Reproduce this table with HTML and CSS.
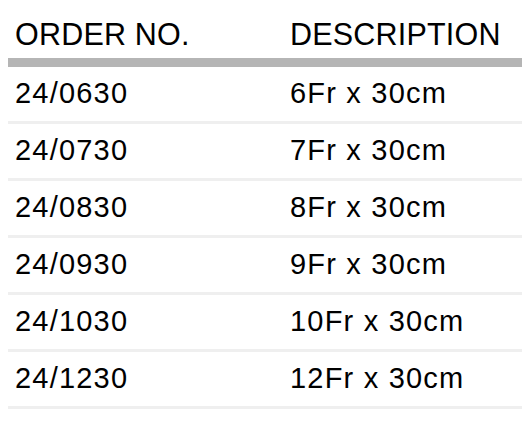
FILE: index.html
```html
<!DOCTYPE html>
<html>
<head>
<meta charset="utf-8">
<link rel="stylesheet" href="styles.css">
</head>
<body>
<div class="table">
  <div class="head">
    <div class="cell">ORDER NO.</div>
    <div class="cell">DESCRIPTION</div>
  </div>
  <div class="row"><div class="cell">24/0630</div><div class="cell">6Fr x 30cm</div></div>
  <div class="row"><div class="cell">24/0730</div><div class="cell">7Fr x 30cm</div></div>
  <div class="row"><div class="cell">24/0830</div><div class="cell">8Fr x 30cm</div></div>
  <div class="row"><div class="cell">24/0930</div><div class="cell">9Fr x 30cm</div></div>
  <div class="row"><div class="cell">24/1030</div><div class="cell">10Fr x 30cm</div></div>
  <div class="row"><div class="cell">24/1230</div><div class="cell">12Fr x 30cm</div></div>
</div>
</body>
</html>
```
FILE: styles.css
```css
html, body {
  margin: 0;
  padding: 0;
  background: #ffffff;
}
body {
  font-family: "Liberation Sans", Arial, sans-serif;
  color: #000;
}
.table {
  margin-left: 8px;
}
.head, .row {
  display: grid;
  grid-template-columns: 275px 1fr;
  padding-left: 7px;
}
.head {
  font-size: 30.5px;
  line-height: 30px;
  letter-spacing: 0.2px;
  padding-top: 19px;
  padding-bottom: 9px;
  border-bottom: 9px solid #b5b5b5;
}
.row {
  font-size: 29px;
  line-height: 29px;
  letter-spacing: 1.2px;
  padding-top: 12px;
  padding-bottom: 13px;
  border-bottom: 3px solid #efefef;
}
```
